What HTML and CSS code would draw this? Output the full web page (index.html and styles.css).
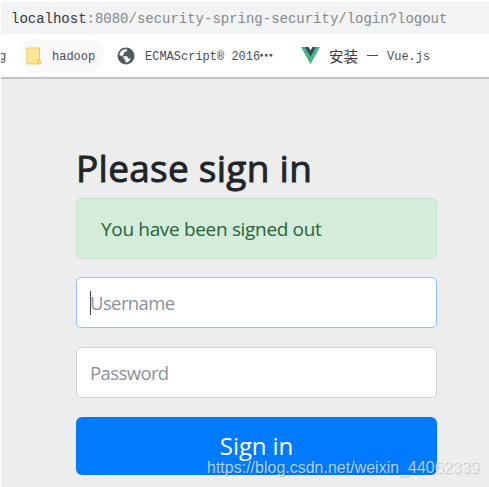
FILE: index.html
```html
<!DOCTYPE html>
<html lang="en">
<head>
<meta charset="utf-8">
<title>Please sign in</title>
<link rel="stylesheet" href="styles.css">
</head>
<body>
<div class="address"><span class="host">localhost</span>:8080/security-spring-security/login?logout</div>
<nav class="bookmarks">
  <span class="clipped">g</span>
  <span class="bookmark folder">
    <svg width="16" height="18" viewBox="0 0 16 18"><path d="M1 1h12.500v12.500h1.200v3.400H1z" fill="#ffe594" stroke="#efc84e"/><path d="M11.500 16.500v-3h2.200" fill="#ffd75e" stroke="#efc84e"/></svg>
    <span class="label">hadoop</span>
  </span>
  <span class="bookmark ecma">
    <svg width="18" height="18" viewBox="0 0 18 18"><circle cx="9" cy="9" r="8.500" fill="#55585c"/><path d="M10.300 2.300 9.500 4.500 7 5.300v2L5.300 8.200l.5 1h4.400l1.200 2.300h2.400c-.6 2.400-2.600 3.900-5.300 3.900v-2.200l-1.800-1.500V10L2.400 8C2.800 4.500 5.800 1.800 10.300 2.300z" fill="#fff"/><path d="M12 3.200l-.5 2.300-2 1 .3 1.200h2.400l1.500 1.800h1.900c0-2.800-1.200-5-3.600-6.300z" fill="#55585c"/></svg>
    <span class="label">ECMAScript® 2016<b class="dots">⋯</b></span>
  </span>
  <span class="bookmark vue">
    <svg width="19" height="17" viewBox="0 0 19 17"><path d="M0 0h7l2.500 4L12 0h7L9.500 17z" fill="#41b883"/><path d="M4 0h3.500l2 3.500 2-3.500H15L9.500 9.500z" fill="#35495e"/></svg>
    <span class="cjk">安装</span><span class="dash"></span><span class="label">Vue.js</span>
  </span>
</nav>
<main class="page">
  <form class="signin">
    <h1>Please sign in</h1>
    <div class="alert"><span>You have been signed out</span></div>
    <div class="field focused"><i class="caret"></i><span>Username</span></div>
    <div class="field"><span>Password</span></div>
    <div class="button"><span>Sign in</span></div>
  </form>
</main>
<div class="watermark">https://blog.csdn.net/weixin_44062339</div>
</body>
</html>
```
FILE: styles.css
```css
* { box-sizing: border-box; }
body {
  margin: 0;
  width: 489px;
  height: 487px;
  padding: 2px 0 0 1px;
  overflow: hidden;
  position: relative;
  background: #fff;
  font-family: "Open Sans", "Noto Sans", sans-serif;
}
.address {
  height: 32px;
  padding-left: 10px;
  background: #f1f3f4;
  color: #85888b;
  font: 14px/35px "Liberation Mono", monospace;
  letter-spacing: -0.01px;
  white-space: pre;
}
.host { color: #35383b; }
.bookmarks {
  height: 43px;
  display: flex;
  align-items: center;
  font: 12px/16px "Liberation Mono", monospace;
  color: #4b4e52;
  white-space: pre;
  overflow: hidden;
}
.clipped { width: 17px; margin-left: -2px; padding-top: 2px; }
.label { padding-top: 2px; }
.bookmark { display: flex; align-items: center; }
.bookmark svg { display: block; flex: none; }
.folder {
  width: 86px;
  height: 33px;
  margin-left: 2px;
  padding-left: 8px;
  border-radius: 17px;
  background: #f9f9f9;
  gap: 10px;
}
.ecma { margin-left: 13px; gap: 10px; width: 184px; }
.dots { display: inline-block; margin-left: -1px; font: bold 14px/14px "DejaVu Sans", sans-serif; }
.vue { gap: 9px; }
.cjk { font: 14.5px/20px "Noto Sans CJK SC", sans-serif; color: #393c40; }
.dash { width: 11px; height: 1px; background: #4b4e52; }
.page {
  height: 410px;
  border-top: 2px solid #c4c4c4;
  background: #ededed;
  padding: 67px 0 0 75px;
}
.signin { width: 361px; }
h1 {
  margin: 0;
  height: 52px;
  font-size: 37px;
  line-height: 44px;
  font-weight: 400;
  letter-spacing: 0.27px;
  -webkit-text-stroke: 0.9px #212529;
  color: #212529;
  white-space: nowrap;
}
.alert {
  height: 61px;
  padding: 0 24px;
  border: 1px solid #c3e6cb;
  border-radius: 5px;
  background: #d4edda;
  color: #286238;
  font-size: 19px;
  letter-spacing: -0.33px;
  line-height: 60px;
  margin-bottom: 18px;
}
.field {
  height: 51px;
  display: flex;
  align-items: center;
  padding-left: 13px;
  border: 1px solid #ced0d3;
  border-radius: 5px;
  background: #fff;
  color: #8b9299;
  font-size: 18.5px;
  letter-spacing: -0.6px;
  margin-bottom: 19px;
}
.focused { border-color: #8cc3fc; }
.caret { width: 1px; height: 24px; background: #41474d; margin-right: -1px; }
.button {
  height: 58px;
  border-radius: 6px;
  background: #007bff;
  color: #fff;
  font-size: 24px;
  letter-spacing: -0.1px;
  line-height: 58px;
  text-align: center;
}
.watermark {
  position: absolute;
  left: 207px;
  top: 458px;
  font: 16px/20px "Liberation Sans", sans-serif;
  color: rgba(255, 255, 255, .7);
  text-shadow: 1px 1px 1px rgba(0, 0, 0, .2);
  white-space: nowrap;
}
```
